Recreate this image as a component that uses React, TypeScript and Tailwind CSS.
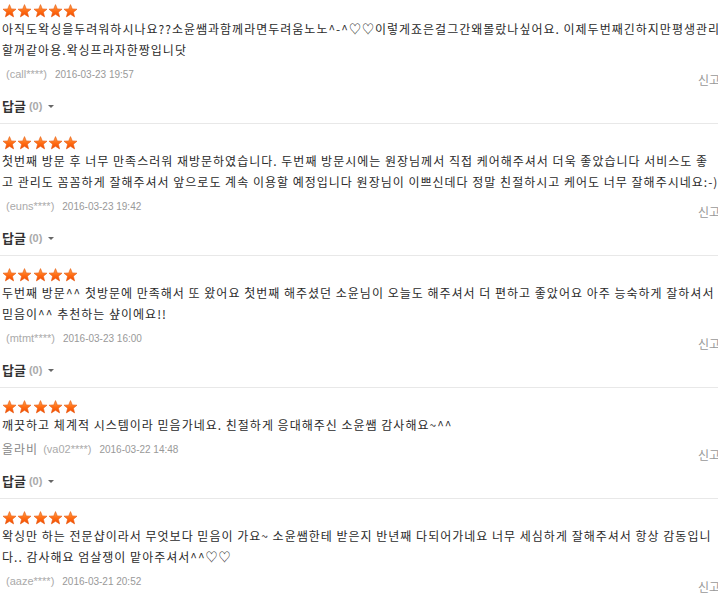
import React from 'react';

interface Review {
  lines: string[];
  name?: string;
  id: string;
  date: string;
}

const reviews: Review[] = [
  {
    lines: [
      '아직도왁싱을두려워하시나요??소윤쌤과함께라면두려움노노^-^♡♡이렇게죠은걸그간왜몰랐나싶어요. 이제두번째긴하지만평생관리',
      '할꺼같아용.왁싱프라자한짱입니닷',
    ],
    id: '(call****)',
    date: '2016-03-23 19:57',
  },
  {
    lines: [
      '첫번째 방문 후 너무 만족스러워 재방문하였습니다. 두번째 방문시에는 원장님께서 직접 케어해주셔서 더욱 좋았습니다 서비스도 좋',
      '고 관리도 꼼꼼하게 잘해주셔서 앞으로도 계속 이용할 예정입니다 원장님이 이쁘신데다 정말 친절하시고 케어도 너무 잘해주시네요:-)',
    ],
    id: '(euns****)',
    date: '2016-03-23 19:42',
  },
  {
    lines: [
      '두번째 방문^^ 첫방문에 만족해서 또 왔어요 첫번째 해주셨던 소윤님이 오늘도 해주셔서 더 편하고 좋았어요 아주 능숙하게 잘하셔서',
      '믿음이^^ 추천하는 샾이에요!!',
    ],
    id: '(mtmt****)',
    date: '2016-03-23 16:00',
  },
  {
    lines: ['깨끗하고 체계적 시스템이라 믿음가네요. 친절하게 응대해주신 소윤쌤 감사해요~^^'],
    name: '올라비',
    id: '(va02****)',
    date: '2016-03-22 14:48',
  },
  {
    lines: [
      '왁싱만 하는 전문샵이라서 무엇보다 믿음이 가요~ 소윤쌤한테 받은지 반년째 다되어가네요 너무 세심하게 잘해주셔서 항상 감동입니',
      '다.. 감사해요 엄살쟁이 맡아주셔서^^♡♡',
    ],
    id: '(aaze****)',
    date: '2016-03-21 20:52',
  },
];

function Star() {
  return (
    <svg width="15" height="14" viewBox="0 0 15 14">
      <defs>
        <linearGradient id="starFill" x1="0" y1="0" x2="0" y2="1">
          <stop offset="0" stopColor="#ffa24a" />
          <stop offset="0.55" stopColor="#ff6a12" />
          <stop offset="1" stopColor="#f04a00" />
        </linearGradient>
      </defs>
      <path
        d="M7.5 0.6 L9.3 4.9 L14 5.2 L10.4 8.2 L11.6 12.9 L7.5 10.3 L3.4 12.9 L4.6 8.2 L1 5.2 L5.7 4.9 Z"
        fill="url(#starFill)"
        stroke="#e85a10"
        strokeWidth="0.6"
        strokeLinejoin="round"
      />
    </svg>
  );
}

function ReviewItem({ review }: { review: Review }) {
  return (
    <li className="border-t border-[#e8e8e8] pt-[12px] pb-[7px]">
      <div className="flex h-[14px] gap-[0.3px] pl-[2px]">
        {[0, 1, 2, 3, 4].map((i) => (
          <Star key={i} />
        ))}
      </div>
      <div className="pl-[2px] text-[12px] leading-[21px] tracking-[1px] text-[#2b2b2b]">
        {review.lines.map((line, i) => (
          <p key={i} className="whitespace-nowrap">
            {line}
          </p>
        ))}
      </div>
      <div className="mt-[4px] flex h-[20px] items-center">
        {review.name && (
          <span className="pl-[2px] pr-[5px] text-[12px] tracking-[1px] text-[#888]">{review.name}</span>
        )}
        <span
          className={`text-[11px] text-[#aaa] ${review.name ? '' : 'pl-[6px]'}`}
          style={{ fontFamily: '"Liberation Sans", Arial, sans-serif' }}
        >
          {review.id}
        </span>
        <span
          className="pl-[8px] text-[10px] text-[#999]"
          style={{ fontFamily: '"Liberation Sans", Arial, sans-serif' }}
        >
          {review.date}
        </span>
        <span className="ml-auto mt-[11px] text-[12px] text-[#999]">신고</span>
      </div>
      <div className="mt-[12px] flex h-[20px] items-center pl-[2px]">
        <span className="text-[13px] font-bold text-[#333]">답글</span>
        <span
          className="pl-[3px] text-[11px] font-bold text-[#aaa]"
          style={{ fontFamily: '"Liberation Sans", Arial, sans-serif' }}
        >
          (0)
        </span>
        <span className="ml-[6px] mt-[1px] h-0 w-0 border-x-[3px] border-t-[3px] border-x-transparent border-t-[#666]" />
      </div>
    </li>
  );
}

export default function App() {
  return (
    <div
      className="h-[601px] w-[718px] overflow-hidden bg-white"
      style={{ fontFamily: '"Noto Sans CJK KR", "Noto Sans", sans-serif' }}
    >
      <ul className="-mt-[9px] w-[720px]">
        {reviews.map((r) => (
          <ReviewItem key={r.id} review={r} />
        ))}
      </ul>
    </div>
  );
}
